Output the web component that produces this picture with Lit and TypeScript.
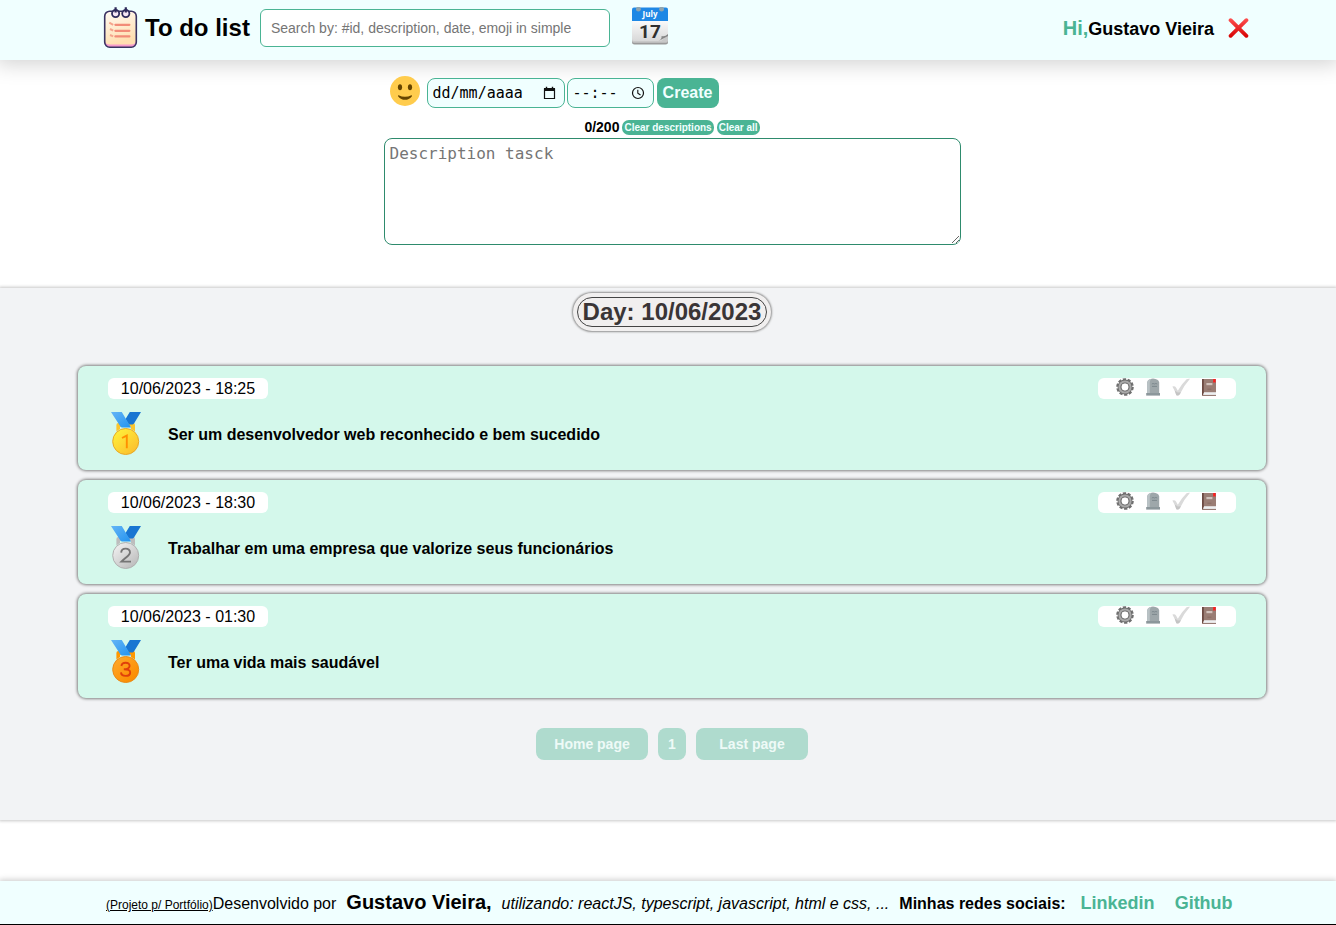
import { LitElement, html, css, svg } from "lit";
import { customElement, property, state } from "lit/decorators.js";

interface Task {
  id: number;
  place: 1 | 2 | 3;
  when: string;
  text: string;
}

const medalTones = {
  1: { light: "#ffee3a", dark: "#fbc02d", edge: "#e8a826", digit: "#ff8f00", loop: "#fbc62d" },
  2: { light: "#eeeeee", dark: "#bdbdbd", edge: "#b0b0b0", digit: "#757575", loop: "#bdbdbd" },
  3: { light: "#ffa726", dark: "#fb8c00", edge: "#e88a18", digit: "#e0400a", loop: "#ff9800" },
};

const digitShapes = {
  1: svg`<path d="M11 27 L15.8 24.6 V37.2"/>`,
  2: svg`<path d="M10.2 27.6 C10.4 22.4 19 22.4 19 27.4 C19 30.4 14 32.8 10.4 36.6 H20"/>`,
  3: svg`<path d="M10.4 27 C11 22.6 18.8 22.8 18.6 27 C18.4 29.8 15.6 30.2 12.8 30.2 C16.4 30.2 19.4 31 19.2 33.6 C19 38 10.2 38 10 33.4"/>`,
};

@customElement("task-card")
export class TaskCard extends LitElement {
  @property({ attribute: false }) task!: Task;

  static styles = css`
    :host { display: block; }
    .card {
      box-sizing: border-box;
      height: 104px;
      padding: 12px 30px;
      border-radius: 8px;
      background: #d4f8eb;
      box-shadow: 0 0 3px 1px #808080;
    }
    .top { display: flex; justify-content: space-between; }
    .when {
      box-sizing: border-box;
      width: 160px;
      height: 21px;
      line-height: 21px;
      border-radius: 6px;
      background: #fff;
      text-align: center;
    }
    .tools {
      box-sizing: border-box;
      display: flex;
      gap: 10px;
      width: 138px;
      height: 21px;
      padding: 0 18px;
      border-radius: 6px;
      background: #fff;
    }
    button { width: 18px; height: 19px; padding: 0; border: 0; background: none; cursor: pointer; }
    svg { display: block; }
    .body { display: flex; align-items: flex-start; gap: 25px; margin-top: 12px; }
    .medal { width: 35px; display: flex; justify-content: center; }
    .text { margin: 0; font-size: 16px; font-weight: bold; line-height: 48px; }
  `;

  private medal() {
    const p = this.task.place;
    const t = medalTones[p];
    return html`<svg width="30" height="44" viewBox="0 0 30 44" role="img" aria-label="Medal ${p}">
      <defs>
        <linearGradient id="disc" x1="0.15" y1="0.1" x2="0.85" y2="0.9"><stop stop-color=${t.light}></stop><stop offset="1" stop-color=${t.dark}></stop></linearGradient>
        <linearGradient id="band" x1="0" y1="0" x2="1" y2="1"><stop stop-color="#64b5f6"></stop><stop offset="1" stop-color="#2494f0"></stop></linearGradient>
      </defs>
      <path d="M5.4 20.5V14Q5.4 12 7.4 12H22Q24 12 24 14V20.5L20 18V15.8H9V18Z" fill=${t.loop}></path>
      <path d="M18.8 1H30L23 12.6Q22.6 13.4 21.6 13.4H18L14.4 8.2Z" fill="#1976d2"></path>
      <path d="M0 1H10.8L20 16.4H11.2Q10 16.4 9.4 15.4Z" fill="url(#band)"></path>
      <circle cx="14.7" cy="30.5" r="13" fill="url(#disc)" stroke=${t.edge} stroke-width="1"></circle>
      <g fill="none" stroke=${t.digit} stroke-width="1.9">${digitShapes[p]}</g>
    </svg>`;
  }

  render() {
    return html`<article class="card">
      <div class="top">
        <time class="when">${this.task.when}</time>
        <div class="tools">
          <button aria-label="Edit">
            <svg width="18" height="19" viewBox="0 0 18 19">
              <circle cx="9" cy="9" r="7.6" fill="none" stroke="#707070" stroke-width="2.4" stroke-dasharray="3.2 1.576"></circle>
              <circle cx="9" cy="9" r="5.4" fill="none" stroke="#6c6c6c" stroke-width="4"></circle>
              <circle cx="9" cy="9" r="5.6" fill="none" stroke="#a8a8a8" stroke-width="2"></circle>
              <circle cx="9" cy="9" r="3.2" fill="#fff"></circle>
            </svg>
          </button>
          <button aria-label="Delete">
            <svg width="18" height="19" viewBox="0 0 18 19">
              <path d="M3.2 15.5V4.4Q3.8 1 9 .6Q14.6 1 15.2 4.4V15.5Z" fill="#9ea7aa"></path>
              <path d="M3.2 15.5V4.4Q3.8 1.4 7.4 .7Q5.8 2.4 5.8 4.4V15.5Z" fill="#b9c2c5"></path>
              <path d="M2.2 15H16V17.6H2.2Z" fill="#8c979b"></path>
              <path d="M7.8 6Q9 5 10.4 6Q12 5 13.2 6M8 8.4H13" fill="none" stroke="#78858a" stroke-width="0.9"></path>
            </svg>
          </button>
          <button aria-label="Done">
            <svg width="18" height="19" viewBox="0 0 18 19">
              <path d="M.4 8.6Q2.6 7.4 4 9.4L5.8 12.8Q9.6 5.8 14.6 1.2Q16.4 .4 18 .8Q12 7.4 8 16Q6.2 18.4 4.2 17Q2.8 12.6 .4 8.6Z" fill="#dadada"></path>
              <path d="M2.6 12.6L5.8 14.6L8.8 14.2L8 16Q6.2 18.4 4.2 17Q3.6 14.8 2.6 12.6Z" fill="#c4c4c4"></path>
            </svg>
          </button>
          <button aria-label="Notes">
            <svg width="18" height="19" viewBox="0 0 18 19">
              <path d="M2 1H16V14.5H4L3 17.8H2Z" fill="#9a7d74"></path>
              <path d="M2 1H3.8V15L3 17H2Z" fill="#6c4a42"></path>
              <path d="M4 14.6H16V16.8H3.2Z" fill="#eceff1"></path>
              <path d="M2.4 17.4H16" stroke="#8a6c63" stroke-width="1"></path>
              <path d="M6.4 5H12.4V7.2H6.4Z" fill="#d2c2bc"></path>
              <path d="M13.2 1H15.6V4.8L14.4 4.2L13.2 4.8Z" fill="#ff1c1c"></path>
              <path d="M7.4 11.2H11.4" stroke="#866860" stroke-width="0.8"></path>
            </svg>
          </button>
        </div>
      </div>
      <div class="body">
        <div class="medal">${this.medal()}</div>
        <p class="text">${this.task.text}</p>
      </div>
    </article>`;
  }
}

@customElement("app-root")
export class AppRoot extends LitElement {
  @state() private description = "";

  private tasks: Task[] = [
    { id: 1, place: 1, when: "10/06/2023 - 18:25", text: "Ser um desenvolvedor web reconhecido e bem sucedido" },
    { id: 2, place: 2, when: "10/06/2023 - 18:30", text: "Trabalhar em uma empresa que valorize seus funcionários" },
    { id: 3, place: 3, when: "10/06/2023 - 01:30", text: "Ter uma vida mais saudável" },
  ];

  static styles = css`
    :host {
      display: flex;
      flex-direction: column;
      min-height: 100vh;
      font-family: "Liberation Sans", Arial, sans-serif;
      font-size: 16px;
      color: #000;
      background: #fff;
    }
    svg { display: block; flex: none; }
    button { font-family: inherit; cursor: pointer; border: 0; padding: 0; }
    .header {
      display: flex;
      align-items: center;
      box-sizing: border-box;
      height: 60px;
      padding: 0 87px 4px 103px;
      background: #f0ffff;
      box-shadow: 0 0 20px 4px rgba(0, 0, 0, 0.18);
    }
    .title { margin: 0 10px 0 7px; font-size: 24px; line-height: 28px; white-space: nowrap; }
    .search {
      box-sizing: border-box;
      width: 350px;
      height: 38px;
      padding: 0 10px;
      border: 1px solid #4ab494;
      border-radius: 6px;
      background: #fff;
      font: 14px "Liberation Sans", Arial, sans-serif;
    }
    .icon-btn { background: none; }
    .calendar { margin: 0 auto 4px 22px; }
    .greeting { display: flex; align-items: baseline; margin-right: 14px; white-space: nowrap; font-weight: bold; }
    .hi { color: #4ab494; font-size: 20px; }
    .user { font-size: 18px; }
    .page-center { padding-left: 8px; }
    .composer {
      box-sizing: border-box;
      width: 577px;
      max-width: 100%;
      margin: 16px auto 43px;
    }
    .row { display: flex; align-items: flex-end; padding-left: 6px; height: 32px; }
    .smile { margin-right: 7px; align-self: flex-start; }
    .field {
      box-sizing: border-box;
      display: flex;
      align-items: center;
      justify-content: space-between;
      height: 30px;
      padding: 0 8px 0 5px;
      border: 1px solid #4ab494;
      border-radius: 8px;
      background: #f0ffff;
    }
    .date { width: 138px; margin-right: 2px; }
    .time { width: 87px; margin-right: 3px; }
    .field input {
      min-width: 0;
      flex: 1;
      padding: 0;
      border: 0;
      outline: 0;
      background: none;
      font: 15px "DejaVu Sans Mono", monospace;
    }
    .field input::placeholder { color: #000; opacity: 1; }
    .create {
      width: 62px;
      height: 30px;
      border-radius: 8px;
      background: #4ab494;
      color: #f0ffff;
      font-size: 16px;
      font-weight: bold;
    }
    .tally { display: flex; justify-content: center; align-items: center; gap: 3px; margin: 12px 0 3px; height: 15px; }
    .count { font-size: 14px; line-height: 15px; font-weight: bold; }
    .clear {
      height: 15px;
      padding: 0 2px;
      border-radius: 7px;
      background: #4ab494;
      color: #f0ffff;
      font-size: 10px;
      font-weight: bold;
    }
    .description {
      box-sizing: border-box;
      display: block;
      width: 100%;
      height: 107px;
      padding: 5px;
      border: 1px solid #2e8b6d;
      border-radius: 8px;
      font: 16px "DejaVu Sans Mono", monospace;
    }
    .board {
      box-sizing: border-box;
      padding: 5px 70px 60px 78px;
      background: #f2f3f5;
      box-shadow: 0 0 3px 1px rgba(0, 0, 0, 0.22);
      text-align: center;
    }
    .day {
      display: inline-block;
      box-sizing: border-box;
      height: 38px;
      padding: 4px;
      border-radius: 19px;
      background: #f1efef;
      box-shadow: 0 0 2px 1px #909090;
      vertical-align: top;
    }
    .day h2 {
      box-sizing: border-box;
      margin: 0;
      height: 30px;
      padding: 0 5px;
      border: 1px solid #444;
      border-radius: 15px;
      color: #3a3536;
      font-size: 24px;
      line-height: 28px;
    }
    .list { display: grid; gap: 10px; margin: 35px 0 30px; text-align: left; }
    .pages { display: flex; justify-content: center; gap: 10px; }
    .pages button {
      width: 112px;
      height: 32px;
      border-radius: 8px;
      background: #afdbce;
      color: #eefaf7;
      font-size: 14px;
      font-weight: bold;
    }
    .pages .current { width: 28px; }
    .footer {
      display: flex;
      align-items: baseline;
      box-sizing: border-box;
      height: 44px;
      margin-top: auto;
      padding: 10px 83px 0 106px;
      border-bottom: 1px solid #000;
      background: #f0ffff;
      box-shadow: 0 0 6px 1px rgba(0, 0, 0, 0.22);
      white-space: nowrap;
    }
    .note { font-size: 12px; text-decoration: underline; }
    .author { margin: 0 10px; font-size: 20px; font-weight: bold; }
    .social { margin: 0 15px 0 10px; font-weight: bold; }
    .link { margin-right: 20px; color: #4ab494; font-size: 18px; font-weight: bold; text-decoration: none; }
  `;

  private onInput(e: Event) {
    this.description = (e.target as HTMLTextAreaElement).value;
  }

  private clear() {
    this.description = "";
  }

  render() {
    return html`
      <header class="header">
        <svg width="35" height="42" viewBox="0 0 35 42" aria-hidden="true">
          <defs><linearGradient id="paper" x1="0" y1="0" x2="0.3" y2="1"><stop stop-color="#fffaf2"></stop><stop offset="1" stop-color="#ffdfb0"></stop></linearGradient></defs>
          <rect x="1.7" y="4.2" width="31.6" height="36" rx="5" fill="#f59acb"></rect>
          <path d="M2 10Q2 5 7 5H28Q33 5 33 10V33Q33 37.6 28 37.6H7Q2 37.6 2 33Z" fill="url(#paper)"></path>
          <rect x="1.7" y="4.2" width="31.6" height="36" rx="5" fill="none" stroke="#3a3462" stroke-width="1.6"></rect>
          <g fill="#f7e7f5" stroke="#2f2b5b" stroke-width="1.8"><circle cx="12.6" cy="6.6" r="3.6"></circle><circle cx="22.8" cy="6.6" r="3.6"></circle><path d="M12.6 .2V5.4M22.8 .2V5.4" stroke-width="2.2"></path></g>
          <path d="M12.4 17.8H26.4M12.4 23.8H26.4M12.4 29.4H26.4" stroke="#f28c78" stroke-width="2.2" stroke-linecap="round"></path>
          <path d="M6.3 15.6L10.2 17.8M7 22L10.2 23.6M7 28L10.2 29.4" stroke="#f5a58d" stroke-width="2"></path>
        </svg>
        <h1 class="title">To do list</h1>
        <input class="search" type="search" aria-label="Search" placeholder="Search by: #id, description, date, emoji in simple" />
        <button class="icon-btn calendar" aria-label="Calendar">
          <svg width="36" height="38" viewBox="0 0 36 38">
            <defs><linearGradient id="sheet" x1="0" y1="0" x2="0" y2="1"><stop stop-color="#fafafa"></stop><stop offset="1" stop-color="#d8d8d8"></stop></linearGradient></defs>
            <rect x="0" y="5" width="36" height="32.6" rx="2.5" fill="#9a9a9a"></rect>
            <rect x="0" y="4" width="36" height="31.8" rx="2" fill="#c8c8c8"></rect>
            <path d="M0 14H36V28L29 34H2Q0 34 0 32Z" fill="url(#sheet)"></path>
            <path d="M2 .4H34Q36 .4 36 2.4V14H0V2.4Q0 .4 2 .4Z" fill="#1e88e5"></path>
            <path d="M26.6 34Q30 32 29.6 29Q33 30 36 27V29Z" fill="#858585"></path>
            <circle cx="6.4" cy="2.2" r="2.4" fill="#90a4ae"></circle><circle cx="29.6" cy="2.2" r="2.4" fill="#90a4ae"></circle>
            <text x="18" y="10.4" text-anchor="middle" font-family="Open Sans, sans-serif" font-size="8" font-weight="700" fill="#fff">July</text>
            <text x="18" y="31" text-anchor="middle" font-family="Roboto, sans-serif" font-size="19" font-weight="700" fill="#303030">17</text>
          </svg>
        </button>
        <div class="greeting"><span class="hi">Hi,</span><span class="user">Gustavo Vieira</span></div>
        <button class="icon-btn" aria-label="Sign out">
          <svg width="21" height="20" viewBox="0 0 21 20">
            <defs><linearGradient id="cross" x1="0" y1="0" x2="0" y2="20" gradientUnits="userSpaceOnUse"><stop stop-color="#ff5252"></stop><stop offset="1" stop-color="#d50000"></stop></linearGradient></defs>
            <path d="M2.6 2.2L18.4 17.8M18.4 2.2L2.6 17.8" stroke="url(#cross)" stroke-width="3.8" stroke-linecap="round"></path>
          </svg>
        </button>
      </header>

      <div class="page-center">
        <form class="composer" @submit=${(e: Event) => e.preventDefault()}>
          <div class="row">
            <button type="button" class="icon-btn smile" aria-label="Choose emoji">
              <svg width="30" height="30" viewBox="0 0 30 30">
                <circle cx="15" cy="15" r="15" fill="#ffcc4d"></circle>
                <ellipse cx="10" cy="11.2" rx="2.1" ry="3" fill="#664500"></ellipse><ellipse cx="20" cy="11.2" rx="2.1" ry="3" fill="#664500"></ellipse>
                <path d="M8.6 19.2Q15 22.4 21.4 19.2Q22.4 19.2 21.8 20.4Q19 23.8 15 23.8Q11 23.8 8.2 20.4Q7.6 19.2 8.6 19.2Z" fill="#664500"></path>
              </svg>
            </button>
            <label class="field date">
              <input aria-label="Date" placeholder="dd/mm/aaaa" />
              <svg width="13" height="14" viewBox="0 0 13 14"><path d="M1.5 3H11.5V12.5H1.5Z" fill="none" stroke="#111" stroke-width="1.2"></path><path d="M1 2H12V5H1ZM2.8 .8H4.2V3H2.8ZM8.8 .8H10.2V3H8.8Z" fill="#111"></path></svg>
            </label>
            <label class="field time">
              <input aria-label="Time" placeholder="--:--" />
              <svg width="14" height="14" viewBox="0 0 14 14"><circle cx="7" cy="7" r="5.5" fill="none" stroke="#111" stroke-width="1.2"></circle><path d="M6.8 3.8V7.2L9.5 9" fill="none" stroke="#111" stroke-width="1.1"></path></svg>
            </label>
            <button class="create">Create</button>
          </div>
          <div class="tally">
            <span class="count">${this.description.length}/200</span>
            <button type="button" class="clear" @click=${this.clear}>Clear descriptions</button>
            <button type="button" class="clear" @click=${this.clear}>Clear all</button>
          </div>
          <textarea class="description" maxlength="200" aria-label="Description" placeholder="Description tasck" .value=${this.description} @input=${this.onInput}></textarea>
        </form>
      </div>

      <main class="board">
        <div class="day"><h2>Day: 10/06/2023</h2></div>
        <div class="list">${this.tasks.map((t) => html`<task-card .task=${t}></task-card>`)}</div>
        <nav class="pages" aria-label="Pages">
          <button>Home page</button>
          <button class="current">1</button>
          <button>Last page</button>
        </nav>
      </main>

      <footer class="footer">
        <span class="note">(Projeto p/ Portfólio)</span>
        <span>Desenvolvido por</span>
        <span class="author">Gustavo Vieira,</span>
        <em>utilizando: reactJS, typescript, javascript, html e css, ...</em>
        <span class="social">Minhas redes sociais:</span>
        <a class="link" href="#linkedin">Linkedin</a>
        <a class="link" href="#github">Github</a>
      </footer>
    `;
  }
}
